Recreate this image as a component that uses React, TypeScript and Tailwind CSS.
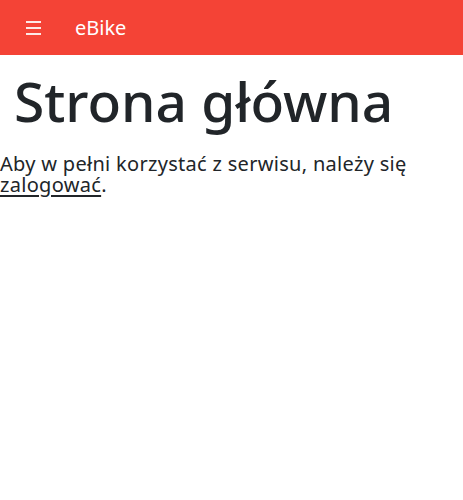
export default function App() {
  return (
    <div className="min-h-[500px] bg-white" style={{ fontFamily: '"Noto Sans", sans-serif' }}>
      <header className="h-[55px] bg-[#f44336] flex items-center">
        <button className="ml-[26px] mt-[1px] w-[15px] flex flex-col gap-[4px]" aria-label="menu">
          <span className="block h-[2px] w-full bg-[#fde8e6]" />
          <span className="block h-[2px] w-full bg-[#fde8e6]" />
          <span className="block h-[2px] w-full bg-[#fde8e6]" />
        </button>
        <span className="ml-[34px] text-[20px] text-white leading-none">eBike</span>
      </header>
      <main className="text-[#212529]">
        <h1 className="pl-[14px] pt-[13px] text-[55px] leading-[1.2] font-medium">Strona główna</h1>
        <p className="text-[20px] leading-[21px] mt-[19px] tracking-[0.3px]">
          Aby w pełni korzystać z serwisu, należy się <a href="#" className="underline underline-offset-[3px] text-[#212529]">zalogować</a>.
        </p>
      </main>
    </div>
  );
}
